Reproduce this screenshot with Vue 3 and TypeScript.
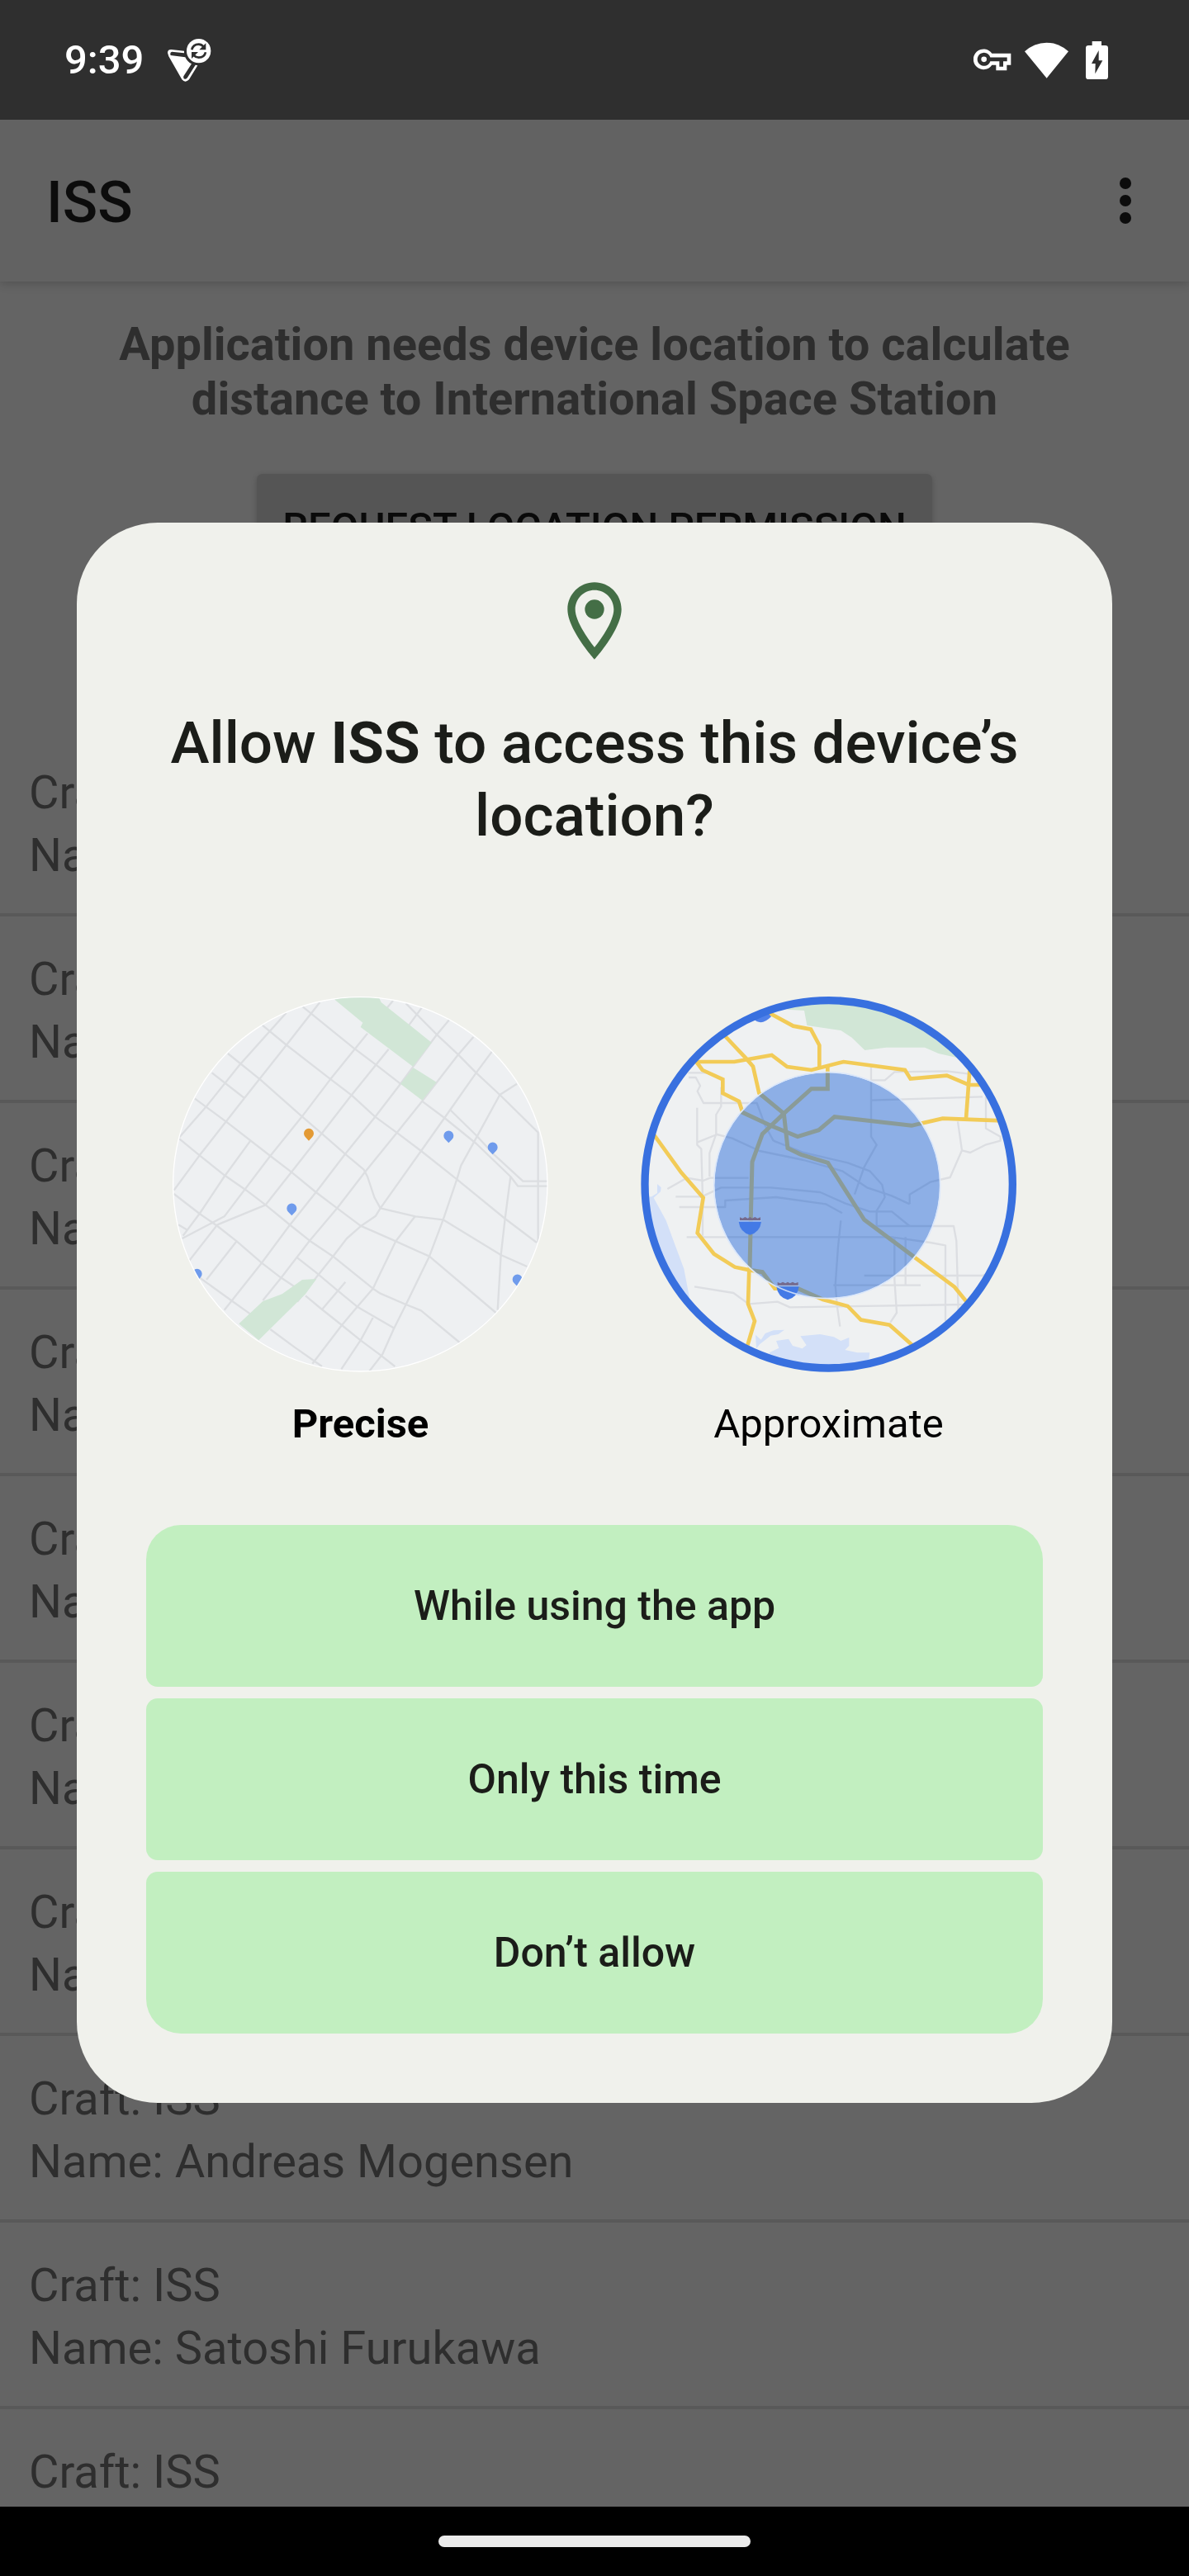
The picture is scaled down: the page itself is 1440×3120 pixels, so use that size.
<script setup lang="ts">
import { ref } from 'vue'

interface CrewMember {
  craft: string
  name?: string
}

type Accuracy = 'precise' | 'approximate'

const crew: CrewMember[] = [
  ...Array.from({ length: 7 }, () => ({ craft: 'ISS', name: '' })),
  { craft: 'ISS', name: 'Andreas Mogensen' },
  { craft: 'ISS', name: 'Satoshi Furukawa' },
  { craft: 'ISS' },
]

const accuracy = ref<Accuracy>('approximate')
const answers: string[] = ['While using the app', 'Only this time', 'Don’t allow']

// Streets of the close-up map, as SVG path data
const streets: string[] = [
  'M470 110L300 300L180 450L82 562',
  'M592 72L470 228L318 420L155 628L62 755',
  'M858 66L830 100M765 185L630 352L525 490L412 630L245 850L92 930',
  'M962 92L912 160M842 242L705 412L598 550L488 690L395 808L220 880L118 1010',
  'M1062 136L1015 192L880 375L793 488L683 625L578 762L480 885L380 1020L245 1190',
  'M1150 198L1095 262L965 430L870 548L755 690L655 820L555 938L450 1075L385 1155',
  'M1218 250L1160 328L1045 492L960 612L812 820',
  'M1308 368L1246 408L1160 565L1105 665L1090 715L1040 862L990 995L905 1170L860 1260L820 1350L772 1412',
  'M812 820L795 848L740 886L690 930L640 995L580 1070L510 1160',
  'M938 850L868 940L810 1060L785 1112L728 1178L672 1245L565 1385',
  'M340 575L245 705L155 840L95 920',
  'M290 940L180 1080',
  'M685 1088L600 1188M785 1218L740 1300L670 1405',
  'M530 88L715 238L795 298L885 368M962 430L1045 492L1160 585L1285 705L1312 740H1420',
  'M383 155L472 228L632 352L708 410L793 488L875 548L960 612L1090 715L1265 858L1380 945',
  'M258 258L375 352L525 485L598 548L683 622L752 680L765 705L790 780L812 820L940 850L1040 862L1250 990L1345 1032',
  'M200 328L318 420',
  'M138 422L255 508L412 630L488 688L578 762L655 820L740 884L868 940L990 995L1232 1200',
  'M82 568L155 628L245 700L325 755L395 808L485 882L555 938L640 995L785 1112L812 1130L905 1170L960 1192L1100 1308',
  'M62 768L155 840L220 885L290 940L380 1018L450 1072L520 1118',
  'M78 880L112 900',
  'M510 1000L580 1055L655 1118L728 1178L860 1255',
  'M540 1138L600 1188L672 1245L740 1300L810 1352L865 1395',
  'M150 1068L180 1090L270 1155L340 1205M412 1260L500 1325L600 1395',
  'M905 76L1018 190L1095 262L1160 328L1246 408L1385 545V945',
  'M1065 462L1160 555L1225 625L1330 722H1420',
  'M1285 705L1265 858L1250 990L1238 1190',
]

const pins: Array<[number, number, string]> = [
  [552, 550, '#e39a35'],
  [1060, 558, '#6f9bec'],
  [1220, 600, '#6f9bec'],
  [490, 822, '#6f9bec'],
  [146, 1060, '#6f9bec'],
  [1310, 1080, '#6f9bec'],
]

// Minor roads and highways of the wide-area map
const minorRoads: string[] = [
  'M220 328H290M222 345H248L264 375L254 395L276 438H470L500 520L530 575',
  'M340 380V450L322 480V550L298 620V705',
  'M253 455V590L268 605L273 780V920',
  'M255 580L325 552L380 566L480 612L640 645L780 685L870 745L960 775L1025 805',
  'M530 575L640 618L800 655L880 685L925 735L935 780L905 830V885',
  'M145 750L215 710L275 720L300 710H440',
  'M175 778H270L340 745L520 745L700 762L790 802L880 832H960L1025 885',
  'M188 816H355V792L540 780L720 805L780 838',
  'M215 925H960L1100 945L1155 955V1230',
  'M905 885H1185L1195 940L1202 1190',
  'M885 305V560L905 590L860 670L825 770',
  'M885 355H935L970 325L1160 322L1240 332',
  'M885 428L1290 415',
  'M1200 505L1215 610L1172 708L1100 725L1025 770V805',
  'M1302 415V530L1355 560V575L1300 590L1245 618L1215 610',
  'M860 1065H1290L1310 1055',
  'M748 1100H1065M1010 925V1100',
  'M243 1105L385 1128L440 1168L545 1160L590 1180L1230 1170',
  'M775 865L765 960L755 1100L762 1180L772 1250',
  'M970 925V1080L978 1200L955 1235',
]

const highways: string[] = [
  'M510 108L602 158L666 170L697 228V310',
  'M352 192L430 275L456 305L478 402L568 476L582 602L630 625L728 655L860 862L1045 1000L1188 1106L1240 1170',
  'M250 288H388L524 264L580 306L668 318L785 288L1008 318L1028 350L1160 338L1240 372H1300',
  'M250 288L272 318L346 352V402L405 432L418 472L520 520L618 560L695 536L752 488L1032 520L1145 494L1360 502',
  'M727 300V386H668L568 476L490 550L453 652L448 850L444 1040',
  'M1243 320L1230 494',
  'M90 545L195 690L275 782L254 910L314 986L390 1034L444 1045L490 1052L535 1112L620 1112L710 1152L800 1176L848 1226L952 1244L1040 1322',
  'M442 1040L438 1168L462 1230L436 1318',
]
</script>

<template>
  <div class="screen">
    <header class="status-bar">
      <span class="clock">9:39</span>
      <svg class="notification" viewBox="605 138 162 162" aria-hidden="true">
        <path
          fill="#fff"
          d="M608 192Q608 179 622 180L668 185V193L624 188Q615 189 619 201L672 208Q680 225 695 232L666 277Q664 288 672 287Q677 287 680 282L709 236L717 238L686 289Q672 303 660 289L612 205Z"
        />
        <circle cx="721" cy="185" r="44" fill="#fff" />
        <g fill="none" stroke="#2f2f2f" stroke-width="8">
          <path d="M696 181Q700 161 721 161Q731 161 739 170" />
          <path d="M746 190Q742 209 721 209Q711 209 703 201" />
        </g>
        <path fill="#2f2f2f" d="M747 157V181H723ZM695 213V189H719Z" />
      </svg>
      <span class="spacer" />
      <svg class="key" viewBox="238 180 138 80" aria-hidden="true">
        <path
          fill="#fff"
          fill-rule="evenodd"
          d="M305 197A37 37 0 1 0 305 239H320V258H359V239H374V197ZM299 211H360V225H346V245H332V225H299A24 24 0 1 1 299 211Z"
        />
        <circle cx="276" cy="218" r="10" fill="#fff" />
      </svg>
      <svg class="wifi" viewBox="423 150 159 135" aria-hidden="true">
        <path fill="#fff" d="M423 187A115 115 0 0 1 582 187L503 284Z" />
      </svg>
      <svg class="battery" viewBox="645 150 81 138" aria-hidden="true">
        <path
          fill="#fff"
          fill-rule="evenodd"
          d="M668 150H702V165H716Q726 165 726 175V278Q726 288 716 288H655Q645 288 645 278V175Q645 165 655 165H668ZM692 183L666 231H680L679 268L706 220H692Z"
        />
      </svg>
    </header>

    <div class="stage">
      <div class="app">
        <header class="app-bar">
          <h1 class="app-title">ISS</h1>
          <button class="overflow" type="button" aria-label="More options">
            <svg viewBox="0 0 14 56" aria-hidden="true">
              <circle cx="7" cy="7" r="7" />
              <circle cx="7" cy="28" r="7" />
              <circle cx="7" cy="49" r="7" />
            </svg>
          </button>
        </header>
        <main>
          <section class="request">
            <p class="notice">
              Application needs device location to calculate distance to International Space Station
            </p>
            <button class="request-button" type="button">REQUEST LOCATION PERMISSION</button>
          </section>
          <ul class="crew">
            <li v-for="(member, index) in crew" :key="index" class="member">
              <span>Craft: {{ member.craft }}</span>
              <span v-if="member.name !== undefined">Name: {{ member.name }}</span>
            </li>
          </ul>
        </main>
      </div>

      <div class="overlay">
        <section class="dialog" role="dialog" aria-modal="true" aria-labelledby="dialog-title">
          <svg class="place" viewBox="0 0 24 24" aria-hidden="true">
            <path
              d="M12 2C8.13 2 5 5.13 5 9c0 5.25 7 13 7 13s7-7.75 7-13c0-3.87-3.13-7-7-7zM7 9c0-2.76 2.24-5 5-5s5 2.24 5 5c0 2.88-2.88 7.19-5 9.88C9.92 16.21 7 11.85 7 9z"
            />
            <circle cx="12" cy="9" r="2.5" />
          </svg>
          <h2 id="dialog-title" class="dialog-title">
            Allow <b>ISS</b> to access this device’s location?
          </h2>

          <div class="accuracy" role="radiogroup" aria-label="Location accuracy">
            <label class="choice strong">
              <input v-model="accuracy" class="radio" type="radio" name="accuracy" value="precise" />
              <svg class="map" viewBox="57 51 1365 1365" aria-hidden="true">
                <clipPath id="close-clip"><circle cx="739" cy="733" r="678" /></clipPath>
                <circle cx="739" cy="733" r="682" fill="#fff" />
                <g clip-path="url(#close-clip)">
                  <rect x="57" y="51" width="1365" height="1365" fill="#eef0f2" />
                  <g fill="none" stroke="#dcdee1" stroke-width="7" stroke-linejoin="round">
                    <path v-for="(d, i) in streets" :key="i" :d="d" />
                  </g>
                  <g fill="#d1e6d6">
                    <path d="M640 50H805L815 72L998 218L930 305L740 162L748 146L648 64Z" />
                    <path d="M932 310L1016 362L964 428L885 368Z" />
                    <path d="M298 1240L385 1158L455 1132L528 1080L580 1077L540 1132L370 1300Z" />
                  </g>
                  <path
                    v-for="([x, y, fill], i) in pins"
                    :key="i"
                    :fill="fill"
                    :d="`M${x} ${y + 25}L${x - 13} ${y + 11}A18 18 0 1 1 ${x + 13} ${y + 11}Z`"
                  />
                </g>
                <circle
                  v-if="accuracy === 'precise'"
                  cx="739" cy="733" r="668" fill="none" stroke="#3870df" stroke-width="28"
                />
              </svg>
              <span class="choice-name">Precise</span>
            </label>

            <label class="choice">
              <input v-model="accuracy" class="radio" type="radio" name="accuracy" value="approximate" />
              <svg class="map" viewBox="48 51 1365 1365" aria-hidden="true">
                <clipPath id="wide-clip"><circle cx="731" cy="733" r="678" /></clipPath>
                <clipPath id="area-clip"><circle cx="725" cy="737" r="410" /></clipPath>
                <g clip-path="url(#wide-clip)">
                  <rect x="48" y="51" width="1365" height="1365" fill="#eff1f2" />
                  <path fill="#d1e6d6" d="M580 98L642 102L652 156L775 174L815 200L862 246L940 236H1080L1130 258L1250 285V50H580Z" />
                  <g fill="#d3e0f8">
                    <path d="M70 780L88 778L108 765V732L122 745L120 760L95 782L140 865L175 960L205 1040L225 1145L120 1060L60 820Z" />
                    <path d="M465 1280L485 1298L500 1275L530 1264L570 1262L548 1278L520 1283L480 1315L468 1330Z" />
                    <path d="M515 1345L550 1328L540 1302L585 1295L600 1320L635 1330L650 1318L628 1285L700 1278L750 1288L775 1302L805 1290V1320L790 1335L835 1345H880L870 1420H520Z" />
                  </g>
                  <g fill="none" stroke="#dcdee2" stroke-width="7" stroke-linejoin="round">
                    <path v-for="(d, i) in minorRoads" :key="i" :d="d" />
                  </g>
                  <g fill="none" stroke="#f2cb57" stroke-width="14">
                    <path v-for="(d, i) in highways" :key="i" :d="d" />
                  </g>
                  <path fill="#4f80e8" d="M455 130Q485 162 522 124L500 100Z" />
                  <g clip-path="url(#area-clip)">
                    <circle cx="725" cy="737" r="410" fill="#8dafe6" />
                    <g fill="none" stroke="#80a2d9" stroke-width="7" stroke-linejoin="round">
                      <path v-for="(d, i) in minorRoads" :key="i" :d="d" />
                    </g>
                    <g fill="none" stroke="#8a9b98" stroke-width="15">
                      <path v-for="(d, i) in highways" :key="i" :d="d" />
                    </g>
                  </g>
                  <circle cx="725" cy="737" r="411" fill="none" stroke="#dbe7fa" stroke-width="5" />
                  <g v-for="([x, y], i) in [[445, 867], [582, 1103]]" :key="i">
                    <path
                      fill="#756a8c"
                      :d="`M${x - 37} ${y - 3}V${y - 14}L${x - 27} ${y - 10}L${x - 18} ${y - 15}L${x - 8} ${y - 10}L${x} ${y - 15}L${x + 8} ${y - 10}L${x + 18} ${y - 15}L${x + 27} ${y - 10}L${x + 38} ${y - 14}V${y - 3}Z`"
                    />
                    <path stroke="#a9c4f0" stroke-width="4" :d="`M${x - 41} ${y}H${x + 41}`" />
                    <path
                      fill="#437ae6"
                      :d="`M${x - 41} ${y + 2}H${x + 41}Q${x + 36} ${y + 40} ${x} ${y + 50}Q${x - 36} ${y + 40} ${x - 41} ${y + 2}Z`"
                    />
                  </g>
                  <path fill="none" stroke="#c5d8f8" stroke-width="5" d="M535 1101Q580 1124 625 1135" />
                </g>
                <circle
                  v-if="accuracy === 'approximate'"
                  cx="731" cy="733" r="668" fill="none" stroke="#3870df" stroke-width="28"
                />
              </svg>
              <span class="choice-name">Approximate</span>
            </label>
          </div>

          <div class="answers">
            <button v-for="answer in answers" :key="answer" class="answer" type="button">
              {{ answer }}
            </button>
          </div>
        </section>
      </div>
    </div>

    <footer class="nav-bar"><span class="handle" /></footer>
  </div>
</template>

<style>
body {
  margin: 0;
  background: #000;
}
</style>

<style scoped>
.screen {
  display: flex;
  flex-direction: column;
  height: 100vh;
  font-family: Roboto, "Liberation Sans", sans-serif;
}

.status-bar {
  display: flex;
  flex: none;
  align-items: center;
  height: 145px;
  padding: 0 98px 0 78px;
  background: #2f2f2f;
}

.clock {
  color: #fff;
  font-size: 49px;
  font-weight: 500;
  line-height: 58px;
}

.notification {
  width: 54px;
  height: 54px;
  margin-left: 28px;
}

.spacer {
  flex: 1;
}

.key {
  width: 46px;
  height: 27px;
}

.wifi {
  width: 53px;
  height: 45px;
  margin-left: 16px;
}

.battery {
  width: 27px;
  height: 46px;
  margin-left: 21px;
}

.stage {
  position: relative;
  flex: 1;
  min-height: 0;
  overflow: hidden;
  background: #646464;
}

.app-bar {
  display: flex;
  align-items: center;
  justify-content: space-between;
  height: 196px;
  padding: 0 70px 0 56px;
  background: #626262;
  box-shadow: 0 2px 12px rgba(0, 0, 0, 0.2);
}

.app-title {
  margin: 0;
  padding-top: 4px;
  color: #0c0c0c;
  font-size: 70px;
  font-weight: 500;
  line-height: 82px;
}

.overflow {
  display: flex;
  padding: 0;
  border: 0;
  background: none;
}

.overflow svg {
  width: 14px;
  height: 56px;
  fill: #0c0c0c;
}

.request {
  display: flex;
  flex-direction: column;
  align-items: center;
  padding: 43px 70px 180px;
}

.notice {
  margin: 0 0 58px;
  color: #2e2e2e;
  font-size: 56px;
  font-weight: 700;
  line-height: 66px;
  text-align: center;
}

.request-button {
  height: 130px;
  padding: 0 31px;
  border: 0;
  border-radius: 7px;
  background: #555;
  box-shadow: 0 2px 7px rgba(0, 0, 0, 0.2);
  color: #0a0a0a;
  font: 500 49px/58px Roboto, sans-serif;
}

.crew {
  margin: 0;
  padding: 0;
  list-style: none;
}

.member {
  display: flex;
  flex-direction: column;
  padding: 38px 35px 32px;
  border-bottom: 4px solid #595959;
  color: #2e2e2e;
  font-size: 56px;
  line-height: 76px;
}

.overlay {
  position: absolute;
  inset: 0 0 1px;
  display: flex;
  align-items: center;
  padding: 0 93px;
}

.dialog {
  display: flex;
  flex: 1;
  flex-direction: column;
  align-items: center;
  padding: 63px 84px 84px;
  border-radius: 98px;
  background: #f0f1ec;
}

.place {
  width: 112px;
  height: 112px;
  fill: #446e46;
}

.dialog-title {
  margin: 48px 0 175px;
  color: #1b1d19;
  font-size: 71px;
  font-weight: 500;
  line-height: 88px;
  text-align: center;
}

.accuracy {
  display: flex;
  justify-content: center;
  gap: 112px;
}

.choice {
  position: relative;
  display: flex;
  flex-direction: column;
  align-items: center;
  gap: 34px;
  color: #000;
  font-size: 49px;
  line-height: 58px;
}

.strong {
  font-weight: 700;
}

.radio {
  position: absolute;
  width: 1px;
  height: 1px;
  margin: 0;
  opacity: 0;
}

.map {
  width: 455px;
  height: 455px;
}

.answers {
  display: flex;
  flex-direction: column;
  align-self: stretch;
  gap: 14px;
  margin-top: 93px;
}

.answer {
  height: 196px;
  border: 0;
  border-radius: 14px;
  background: #c2efc0;
  color: #1b1d19;
  font: 500 50px/58px Roboto, sans-serif;
}

.answer:first-child {
  border-top-left-radius: 42px;
  border-top-right-radius: 42px;
}

.answer:last-child {
  border-bottom-right-radius: 42px;
  border-bottom-left-radius: 42px;
}

.nav-bar {
  display: flex;
  flex: none;
  align-items: center;
  justify-content: center;
  height: 84px;
  background: #000;
}

.handle {
  width: 378px;
  height: 14px;
  border-radius: 7px;
  background: #ebebeb;
}
</style>
